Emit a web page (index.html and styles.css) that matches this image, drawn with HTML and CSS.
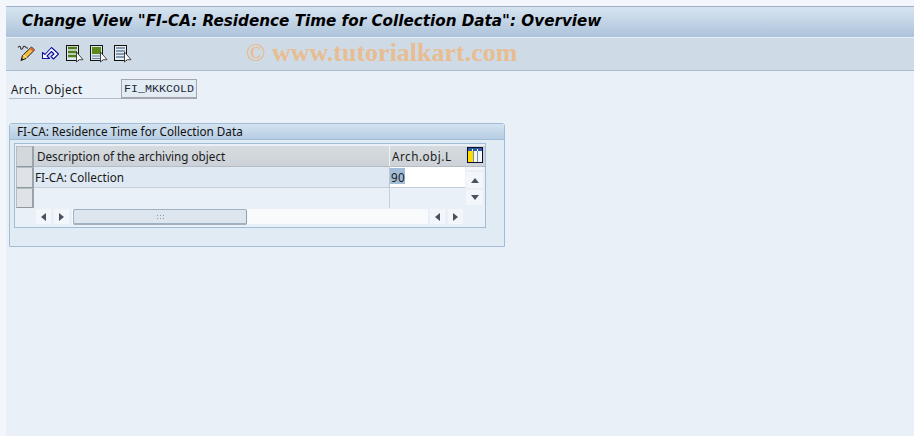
FILE: index.html
```html
<!DOCTYPE html>
<html lang="en">
<head>
<meta charset="utf-8">
<title>Change View</title>
<link rel="stylesheet" href="styles.css">
</head>
<body>
<div class="page">
  <header class="titlebar"><h1>Change View "FI-CA: Residence Time for Collection Data": Overview</h1></header>
  <div class="toolbar">
    <svg class="tool" width="24" height="18" viewBox="0 0 24 18"><path d="M1 2.500c1-2 2.500-1.500 2.500 0s1 2.500 2 1 1-3 2.500-2 1 2 3 1.500" fill="none" stroke="#333" stroke-width="1.100"/><path d="M4 15.500l1.500-5L14.500 2 17.500 5l-8.500 8.500z" fill="#f7bb3e" stroke="#1c1c1c"/><path d="M13.500 3l3 3" stroke="#e2613b" stroke-width="2"/><path d="M6.500 10l3 2.500" stroke="#fff2c0"/><path d="M4 15.500l.8-2.600 1.800 1.500z" fill="#1c1c1c"/></svg>
    <svg class="tool" width="24" height="18" viewBox="0 0 24 18"><path d="M1.500 13.500V7.500l2.500 2L10.500 2.500l7 6.500-5 5-2.500-2.500 3-2.500-2.500-2.500-4.500 4.500 2.500 2.500z" fill="#fff" stroke="#10109c" stroke-width="1.100" stroke-linejoin="round"/></svg>
    <svg class="tool" width="24" height="18" viewBox="0 0 24 18"><rect x="1.500" y="0.500" width="12" height="15" fill="#dfe7ee" stroke="#111"/><path d="M3 3h9M3 7h9M3 11h9" stroke="#4f7d17" stroke-width="2.400"/><path d="M11.500 7v10l2.700-2.300H18z" fill="#fff" stroke="#222" stroke-width="0.800"/></svg>
    <svg class="tool" width="24" height="18" viewBox="0 0 24 18"><rect x="1.500" y="0.500" width="12" height="15" fill="#dfe7ee" stroke="#111"/><rect x="3" y="2" width="9" height="7" fill="#5c8a1a"/><path d="M3 11h9M3 13.500h9" stroke="#65809c" stroke-width="1.200"/><path d="M11.500 7v10l2.700-2.300H18z" fill="#fff" stroke="#222" stroke-width="0.800"/></svg>
    <svg class="tool" width="24" height="18" viewBox="0 0 24 18"><rect x="1.500" y="0.500" width="12" height="15" fill="#e6edf3" stroke="#111"/><path d="M3 3h9M3 6h9M3 9h9M3 12h9" stroke="#65809c" stroke-width="1.400"/><path d="M11.500 7v10l2.700-2.300H18z" fill="#fff" stroke="#222" stroke-width="0.800"/></svg>
    <span class="watermark">© www.tutorialkart.com</span>
  </div>
  <main class="content">
    <div class="field-row">
      <label class="field-label">Arch. Object</label>
      <output class="field-value">FI_MKKCOLD</output>
    </div>
    <section class="group">
      <h2 class="group-title">FI-CA: Residence Time for Collection Data</h2>
      <div class="group-body">
        <div class="table">
          <div class="sel corner"></div>
          <div class="head desc">Description of the archiving object</div>
          <div class="head arch">Arch.obj.L</div>
          <div class="cfg"><svg width="16" height="16" viewBox="0 0 16 16"><rect x="0.500" y="0.500" width="15" height="15" fill="#fff" stroke="#0b0b2b"/><rect x="1" y="1" width="14" height="3" fill="#2a5aa8"/><path d="M5.500 2v2M10.500 2v2" stroke="#fff"/><rect x="1" y="4" width="5" height="11" fill="#ffdc00"/><rect x="6" y="4" width="4" height="11" fill="#f4f7fa"/><rect x="11" y="4" width="4" height="11" fill="#f4f7fa"/><path d="M6.500 4v11M10.500 4v11" stroke="#7d8ea6"/></svg></div>

          <div class="sel"></div>
          <div class="cell desc-cell">FI-CA: Collection</div>
          <div class="cell input"><span class="selected">90</span></div>
          <div class="vscroll"><span class="vtop"></span><button class="sb tall"><i class="tri up"></i></button><button class="sb"><i class="tri down"></i></button></div>

          <div class="sel"></div>
          <div class="cell desc-cell empty"></div>
          <div class="cell empty arch-empty"></div>

          <div class="hscroll">
            <button class="sb"><i class="tri left"></i></button>
            <button class="sb"><i class="tri right"></i></button>
            <div class="track"><div class="thumb"><span class="grip"></span></div></div>
            <button class="sb"><i class="tri left"></i></button>
            <button class="sb"><i class="tri right"></i></button>
          </div>
        </div>
      </div>
    </section>
  </main>
</div>
</body>
</html>
```
FILE: styles.css
```css
* { box-sizing: border-box; }
html, body { margin: 0; padding: 0; }
body { background: #f3f6fa; font-family: "Noto Sans", sans-serif; width: 914px; height: 436px; overflow: hidden; }
.page { margin-left: 6px; padding-top: 6px; height: 436px; display: flex; flex-direction: column; }
.titlebar { height: 31px; background: linear-gradient(#d6e4f0, #adc3da); border-top: 1px solid #9fb0c8; display: flex; align-items: center; padding: 0 0 2px 16px; }
.titlebar h1 { margin: 0; font-family: "DejaVu Sans", sans-serif; font-size: 15.200px; font-weight: bold; font-style: italic; color: #000; white-space: nowrap; }
.toolbar { height: 34px; background: #cedbe7; border-top: 1px solid #e6eef6; border-bottom: 1px solid #a9bcd2; display: flex; align-items: center; padding-left: 11px; position: relative; }
.tool { display: block; }
.watermark { position: absolute; left: 240px; top: 0; font-family: "Liberation Serif", serif; font-size: 26px; line-height: 30px; font-weight: bold; color: #e8bd92; white-space: nowrap; }
.content { flex: 1; background: #e9f0f7; padding: 8px 0 0 4px; font-size: 11.700px; color: #1a1a1a; }
.field-row { display: flex; height: 20px; }
.field-label { width: 112px; height: 20px; margin-left: -1px; padding: 3px 0 0 2px; border-bottom: 1px solid #b4bcc6; font-size: 11.700px; letter-spacing: 0.400px; line-height: 14px; }
.field-value { width: 76px; height: 20px; background: #e3ebf3; border: 1px solid #a3a8ad; border-bottom-width: 2px; font-family: "Liberation Mono", monospace; font-size: 11.670px; line-height: 17px; padding: 1px 0 0 2px; color: #1a2a3a; }
.group { margin-top: 24px; width: 496px; height: 124px; margin-left: -1px; border: 1px solid #a0bcd6; border-radius: 3px 3px 0 0; background: #e1ebf4; }
.group-title { margin: 0; height: 16px; background: linear-gradient(#d4e3f0, #b6cde2); font-size: 11.700px; font-weight: normal; line-height: 15px; padding-left: 7px; color: #111; border-bottom: 1px solid #a0bcd6; }
.group-body { padding: 3px 0 0 4px; }
.table { width: 472px; height: 85px; padding-top: 2px; border: 1px solid #a0bcd6; background: #e9f0f7; display: grid; grid-template-columns: 19px 356px 75px 20px; grid-template-rows: 21px 21px 20px 19px; }
.sel { background: #dfe3e7; border: 1px solid #b4bcc4; border-right: 2px solid #9aa2aa; border-bottom-color: #8f979f; margin-left: 1px; }
.corner { background: #d3d8dd; }
.head { background: linear-gradient(#d6dbdf, #ccd2d7); border-right: 1px solid #f0f3f6; border-bottom: 1px solid #b4bcc4; padding: 3px 0 0 3px; font-size: 11.700px; line-height: 14px; }
.arch { padding-left: 2px; border-right: 0; letter-spacing: 0.500px; }
.cfg { background: #cdd3d8; border-bottom: 1px solid #b4bcc4; padding: 1px 0 0 2px; }
.cfg svg { display: block; }
.cell { border-bottom: 1px solid #c6ced6; font-size: 11.700px; line-height: 14px; }
.desc-cell { background: #dfe9f3; padding: 3px 0 0 1px; border-right: 1px solid #bfc7cf; }
.input { background: #fff; padding: 1px 0 0 0; }
.selected { background: #a3bcd8; display: block; width: 15px; height: 16px; padding: 2px 0 0 1px; letter-spacing: 0.400px; }
.empty { background: #e9f0f7; border-bottom: 0; }
.arch-empty { border-left: 1px solid #c6ced6; margin-left: -1px; }
.vscroll { grid-row: 2 / span 2; grid-column: 4; display: flex; flex-direction: column; padding-left: 1px; }
.vtop { display: block; width: 17px; height: 3px; background: #f3f6fa; margin-bottom: 2px; }
.sb { width: 15px; height: 15px; padding: 0; border: 0; background: #f3f6fa; display: flex; align-items: center; justify-content: center; flex: none; }
.vscroll .sb { width: 17px; }
.vscroll .tall { height: 16px; margin-bottom: 2px; }
.tri { display: block; width: 0; height: 0; border: 4px solid transparent; }
.up { border-bottom: 5px solid #47525f; border-top: 0; }
.down { border-top: 5px solid #47525f; border-bottom: 0; }
.left { border-right: 5px solid #47525f; border-left: 0; }
.right { border-left: 5px solid #47525f; border-right: 0; }
.hscroll { grid-row: 4; grid-column: 2 / span 2; display: flex; align-items: flex-start; gap: 3px; padding-left: 2px; margin-top: 1px; }
.track { flex: none; width: 356px; height: 15px; background: #f8fafc; margin-right: -1px; padding-left: 1px; }
.thumb { width: 174px; height: 16px; background: #dde6ee; border: 1px solid #9fb0c0; border-right-color: #8f9fb0; border-bottom-width: 2px; border-radius: 2px; display: flex; align-items: center; justify-content: center; }
.grip { width: 9px; height: 6px; background-image: radial-gradient(#8a97a5 0.6px, transparent 0.7px); background-size: 3px 3px; }
```
